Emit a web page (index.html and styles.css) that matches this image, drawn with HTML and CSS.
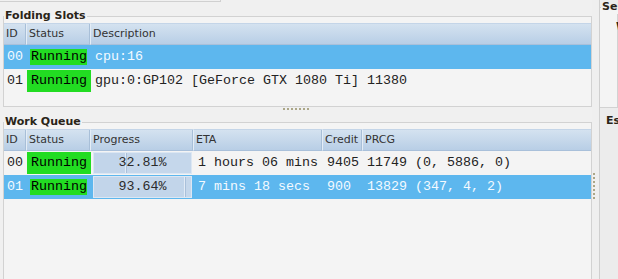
FILE: index.html
```html
<!DOCTYPE html>
<html lang="en">
<head>
  <meta charset="UTF-8" />
  <title>FAHControl - Status</title>
  <link rel="stylesheet" href="styles.css">
</head>
<body>

<div class="window">
  <div class="main">
    <div class="stub"></div>

    <fieldset class="group slots">
      <legend>Folding Slots</legend>
      <table class="grid">
        <colgroup>
          <col class="c-id">
          <col class="c-status">
          <col>
        </colgroup>
        <thead>
          <tr><th>ID</th><th>Status</th><th>Description</th></tr>
        </thead>
        <tbody>
          <tr class="selected">
            <td class="id">00</td>
            <td class="status"><span>Running</span></td>
            <td>cpu:16</td>
          </tr>
          <tr>
            <td class="id">01</td>
            <td class="status"><span>Running</span></td>
            <td>gpu:0:GP102 [GeForce GTX 1080 Ti] 11380</td>
          </tr>
        </tbody>
      </table>
    </fieldset>

    <div class="hsplit"><span class="grip"></span></div>

    <fieldset class="group queue">
      <legend>Work Queue</legend>
      <table class="grid">
        <colgroup>
          <col class="c-id">
          <col class="c-status">
          <col class="c-progress">
          <col class="c-eta">
          <col class="c-credit">
          <col>
        </colgroup>
        <thead>
          <tr><th>ID</th><th>Status</th><th>Progress</th><th>ETA</th><th>Credit</th><th>PRCG</th></tr>
        </thead>
        <tbody>
          <tr>
            <td class="id">00</td>
            <td class="status"><span>Running</span></td>
            <td class="progress">
              <div class="bar"><div class="fill" style="width: 32.81%"></div><span class="pct">32.81%</span></div>
            </td>
            <td>1 hours 06 mins</td>
            <td>9405</td>
            <td>11749 (0, 5886, 0)</td>
          </tr>
          <tr class="selected">
            <td class="id">01</td>
            <td class="status"><span>Running</span></td>
            <td class="progress">
              <div class="bar"><div class="fill" style="width: 93.64%"></div><span class="pct">93.64%</span></div>
            </td>
            <td>7 mins 18 secs</td>
            <td>900</td>
            <td>13829 (347, 4, 2)</td>
          </tr>
        </tbody>
      </table>
    </fieldset>
  </div>

  <div class="vsplit"><span class="grip"></span></div>

  <div class="side">
    <fieldset class="group unit">
      <legend>Selected Work Unit</legend>
      <div class="field">Work Queue ID:</div>
    </fieldset>
    <div class="side-title">Estimated Points</div>
  </div>
</div>

</body>
</html>
```

FILE: styles.css
```css
* {
  box-sizing: border-box;
}

body {
  margin: 0;
  height: 279px;
  overflow: hidden;
  background: #f0f0f0;
  font-family: 'DejaVu Sans', sans-serif;
  font-size: 11px;
  color: #2b2b2b;
}

.window {
  display: flex;
  height: 372px;
}

.main {
  width: 592px;
  display: flex;
  flex-direction: column;
}

.stub {
  width: 221px;
  height: 2px;
  border-bottom: 1px solid #d0d0d0;
  border-right: 1px solid #d0d0d0;
}

/* group boxes */
.group {
  margin: 0 0 0 3px;
  padding: 0;
  min-width: 0;
  border: 1px solid #d2d2d2;
  background: #f4f4f4;
}

.group legend {
  padding: 0 1px;
  margin-left: 0;
  font-weight: bold;
  line-height: 14px;
  color: #2a2418;
}

.slots {
  margin-top: 7px;
  padding-bottom: 13px;
}

.queue {
  flex: 1;
}

/* splitters */
.hsplit {
  height: 8px;
  padding-top: 1px;
  display: flex;
  justify-content: center;
}

.hsplit .grip {
  width: 27px;
  height: 2px;
  background: repeating-linear-gradient(90deg, #aba687 0 2px, transparent 2px 4px);
}

.vsplit {
  width: 7px;
  padding-left: 1px;
  display: flex;
  align-items: center;
  background: #efefef;
}

.vsplit .grip {
  width: 2px;
  height: 27px;
  background: repeating-linear-gradient(180deg, #aba687 0 2px, transparent 2px 4px);
}

/* tables */
.grid {
  width: 100%;
  table-layout: fixed;
  border-collapse: separate;
  border-spacing: 0;
}

.c-id { width: 23px; }
.c-status { width: 64px; }
.c-progress { width: 103px; }
.c-eta { width: 129px; }
.c-credit { width: 40px; }

.grid th {
  padding: 0 0 0 2px;
  line-height: 20px;
  text-align: left;
  font-weight: normal;
  color: #333;
  white-space: nowrap;
  overflow: hidden;
  background: linear-gradient(#d4e2f0, #b8cee6);
  border-top: 1px solid #c4d5e8;
  border-bottom: 1px solid #a9c0da;
  border-right: 1px solid #e4edf6;
  box-shadow: inset -1px 0 #a8bfd8;
}

.grid th:last-child {
  border-right: none;
  box-shadow: none;
}

.grid td {
  padding: 0 0 0 4px;
  line-height: 24px;
  font-family: 'Liberation Mono', monospace;
  font-size: 13.33px;
  color: #222;
  white-space: nowrap;
  overflow: hidden;
}

.grid td.id {
  padding-left: 3px;
}

.grid tr.selected {
  background: #5db7ee;
}

.grid tr.selected td {
  color: #f4faff;
}

/* status cell */
.grid td.status {
  padding-left: 4px;
  line-height: 22px;
  border-top: 1px solid transparent;
  border-bottom: 1px solid transparent;
  background: #22dc22;
  background-clip: padding-box;
}

.grid td.status span {
  color: #000;
}

.grid tr.selected td.status {
  background: none;
}

.grid tr.selected td.status span {
  display: inline-block;
  line-height: 16px;
  margin-left: -1px;
  padding-left: 1px;
  background: #22dc22;
}

/* progress bar */
.grid td.progress {
  padding: 1px 2px;
  line-height: 20px;
}

.bar {
  display: grid;
  border: 1px solid #dce7f3;
  background: #c5d7eb;
}

.bar .fill,
.bar .pct {
  grid-area: 1 / 1;
}

.bar .fill {
  height: 20px;
  border-right: 1px solid #e2ebf6;
  box-shadow: 1px 0 #a9c0da;
  background: #c2d5ea;
}

.bar .pct {
  text-align: center;
  color: #2b2b2b;
}

.grid tr.selected .bar .pct {
  color: #2b2b2b;
}

/* right panel */
.side {
  flex: 1;
  min-width: 0;
  overflow: hidden;
  background: #ececec;
  border-left: 1px solid #cfcfcf;
}

.unit {
  margin: 0;
  height: 108px;
  border-left: none;
  border-top-color: #d2d2d2;
  white-space: nowrap;
}

.unit legend {
  margin-left: 1px;
}

.field {
  padding: 6px 0 0 16px;
  font-weight: bold;
  color: #2a2418;
}

.side-title {
  padding: 6px 0 0 6px;
  font-weight: bold;
  white-space: nowrap;
  color: #2a2418;
}
```
